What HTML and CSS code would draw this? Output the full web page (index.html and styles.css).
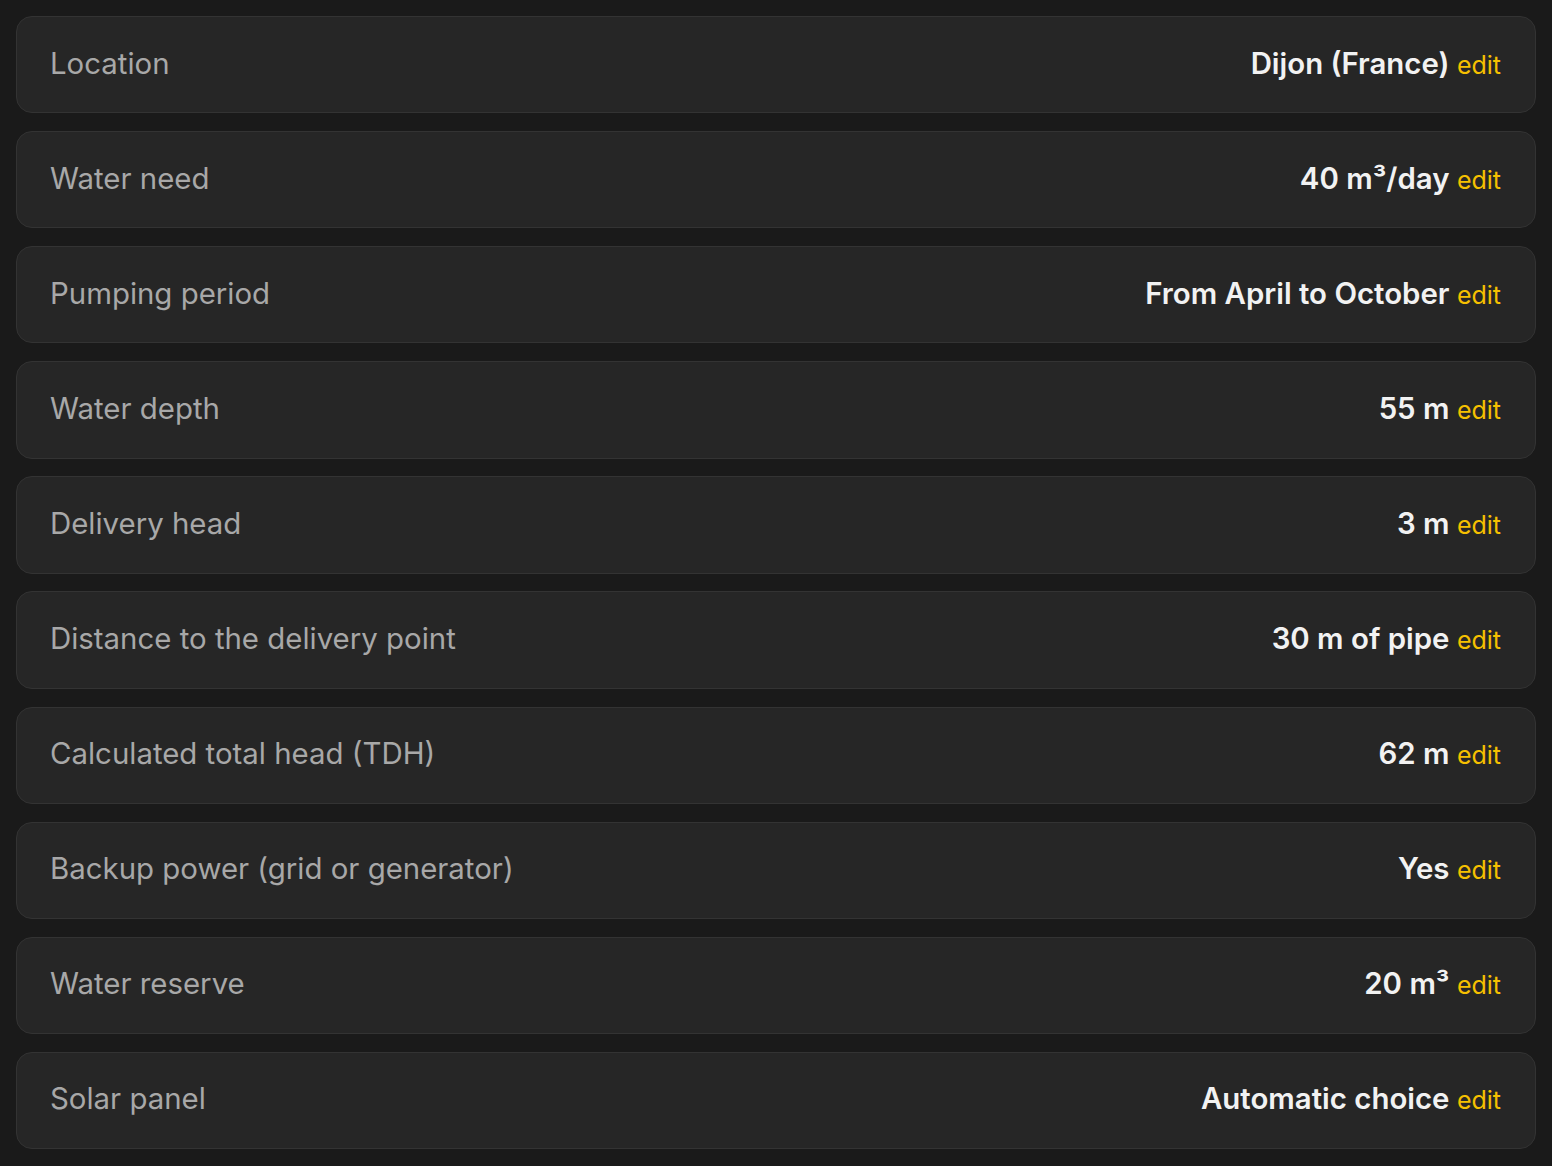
FILE: index.html
```html
<!DOCTYPE html>
<html lang="en">
<head>
    <meta charset="UTF-8">
    <meta name="viewport" content="width=device-width, initial-scale=1.0">
    <title>Pump sizing summary</title>
    <link rel="stylesheet" href="styles.css">
</head>
<body>

<div class="summary">
    <div class="row">
        <span class="label">Location</span>
        <span class="value">Dijon (France) <a class="edit" href="#">edit</a></span>
    </div>
    <div class="row">
        <span class="label">Water need</span>
        <span class="value">40 m³/day <a class="edit" href="#">edit</a></span>
    </div>
    <div class="row">
        <span class="label">Pumping period</span>
        <span class="value">From April to October <a class="edit" href="#">edit</a></span>
    </div>
    <div class="row">
        <span class="label">Water depth</span>
        <span class="value">55 m <a class="edit" href="#">edit</a></span>
    </div>
    <div class="row">
        <span class="label">Delivery head</span>
        <span class="value">3 m <a class="edit" href="#">edit</a></span>
    </div>
    <div class="row">
        <span class="label">Distance to the delivery point</span>
        <span class="value">30 m of pipe <a class="edit" href="#">edit</a></span>
    </div>
    <div class="row">
        <span class="label">Calculated total head (TDH)</span>
        <span class="value">62 m <a class="edit" href="#">edit</a></span>
    </div>
    <div class="row">
        <span class="label">Backup power (grid or generator)</span>
        <span class="value">Yes <a class="edit" href="#">edit</a></span>
    </div>
    <div class="row">
        <span class="label">Water reserve</span>
        <span class="value">20 m³ <a class="edit" href="#">edit</a></span>
    </div>
    <div class="row">
        <span class="label">Solar panel</span>
        <span class="value">Automatic choice <a class="edit" href="#">edit</a></span>
    </div>
</div>

</body>
</html>
```

FILE: styles.css
```css
body {
    font-family: Inter, 'Noto Sans', sans-serif;
    background-color: #1a1a1a;
    margin: 0;
    padding: 16px;
}

.summary {
    display: flex;
    flex-direction: column;
    gap: 17.8px;
}

.row {
    box-sizing: border-box;
    height: 97.3px;
    display: flex;
    align-items: center;
    justify-content: space-between;
    padding: 0 34px 3px 33px;
    background-color: #262626;
    border: 1px solid #333333;
    border-radius: 16px;
}

.label {
    font-size: 29.4px;
    color: #a8a8a8;
}

.value {
    font-size: 29.4px;
    font-weight: 600;
    color: #f2f2f2;
}

.edit {
    font-size: 25px;
    font-weight: 400;
    color: #f5c000;
    text-decoration: none;
}
```
